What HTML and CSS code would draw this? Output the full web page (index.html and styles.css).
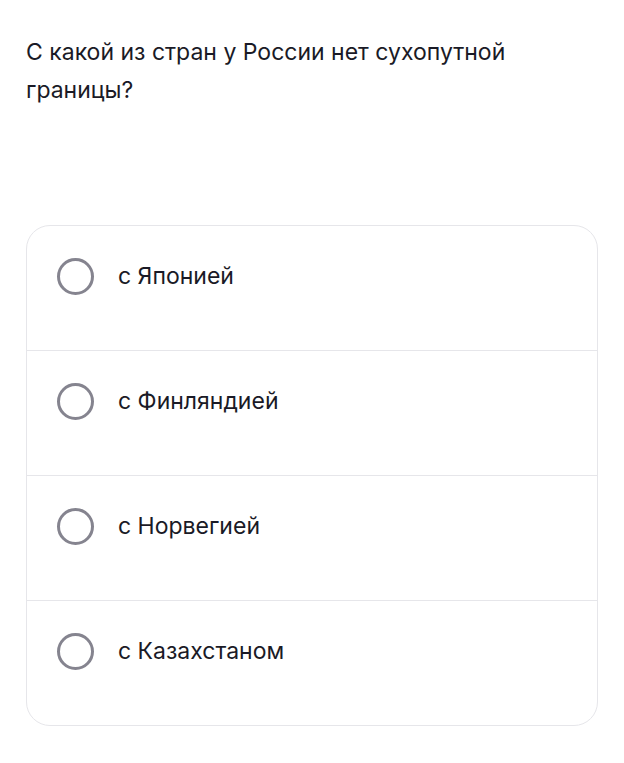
FILE: index.html
```html
<!DOCTYPE html>
<html lang="ru">
<head>
    <meta charset="UTF-8">
    <meta name="viewport" content="width=device-width, initial-scale=1.0">
    <title>Вопрос</title>
    <link rel="stylesheet" href="styles.css">
</head>
<body>

<div class="quiz">
    <h2 class="question">С какой из стран у России нет сухопутной границы?</h2>

    <!-- Answer options -->
    <div class="options">
        <label class="option">
            <input type="radio" name="answer" value="japan">
            <span class="radio"></span>
            <span class="option-text">с Японией</span>
        </label>
        <label class="option">
            <input type="radio" name="answer" value="finland">
            <span class="radio"></span>
            <span class="option-text">с Финляндией</span>
        </label>
        <label class="option">
            <input type="radio" name="answer" value="norway">
            <span class="radio"></span>
            <span class="option-text">с Норвегией</span>
        </label>
        <label class="option">
            <input type="radio" name="answer" value="kazakhstan">
            <span class="radio"></span>
            <span class="option-text">с Казахстаном</span>
        </label>
    </div>
</div>

</body>
</html>
```

FILE: styles.css
```css
body {
    font-family: Inter, "Noto Sans", sans-serif;
    background-color: #fff;
    color: #1a1a26;
    margin: 0;
    padding: 0;
}
.quiz {
    padding: 33px 26px 0 26px;
}
.question {
    font-size: 23px;
    font-weight: 400;
    line-height: 38px;
    margin: 0 0 116px;
    max-width: 540px;
}
.options {
    width: 570px;
    border: 1px solid #e6e6ea;
    border-radius: 24px;
    overflow: hidden;
}
.option {
    display: flex;
    align-items: center;
    height: 100px;
    padding: 0 30px 24px;
    border-bottom: 1px solid #e6e6ea;
    cursor: pointer;
}
.option:last-child {
    border-bottom: none;
}
.option input {
    display: none;
}
.radio {
    width: 31px;
    height: 31px;
    border: 3.5px solid #85848f;
    border-radius: 50%;
    margin-right: 24px;
    flex-shrink: 0;
}
.option-text {
    font-size: 23px;
    line-height: 30px;
}
```
